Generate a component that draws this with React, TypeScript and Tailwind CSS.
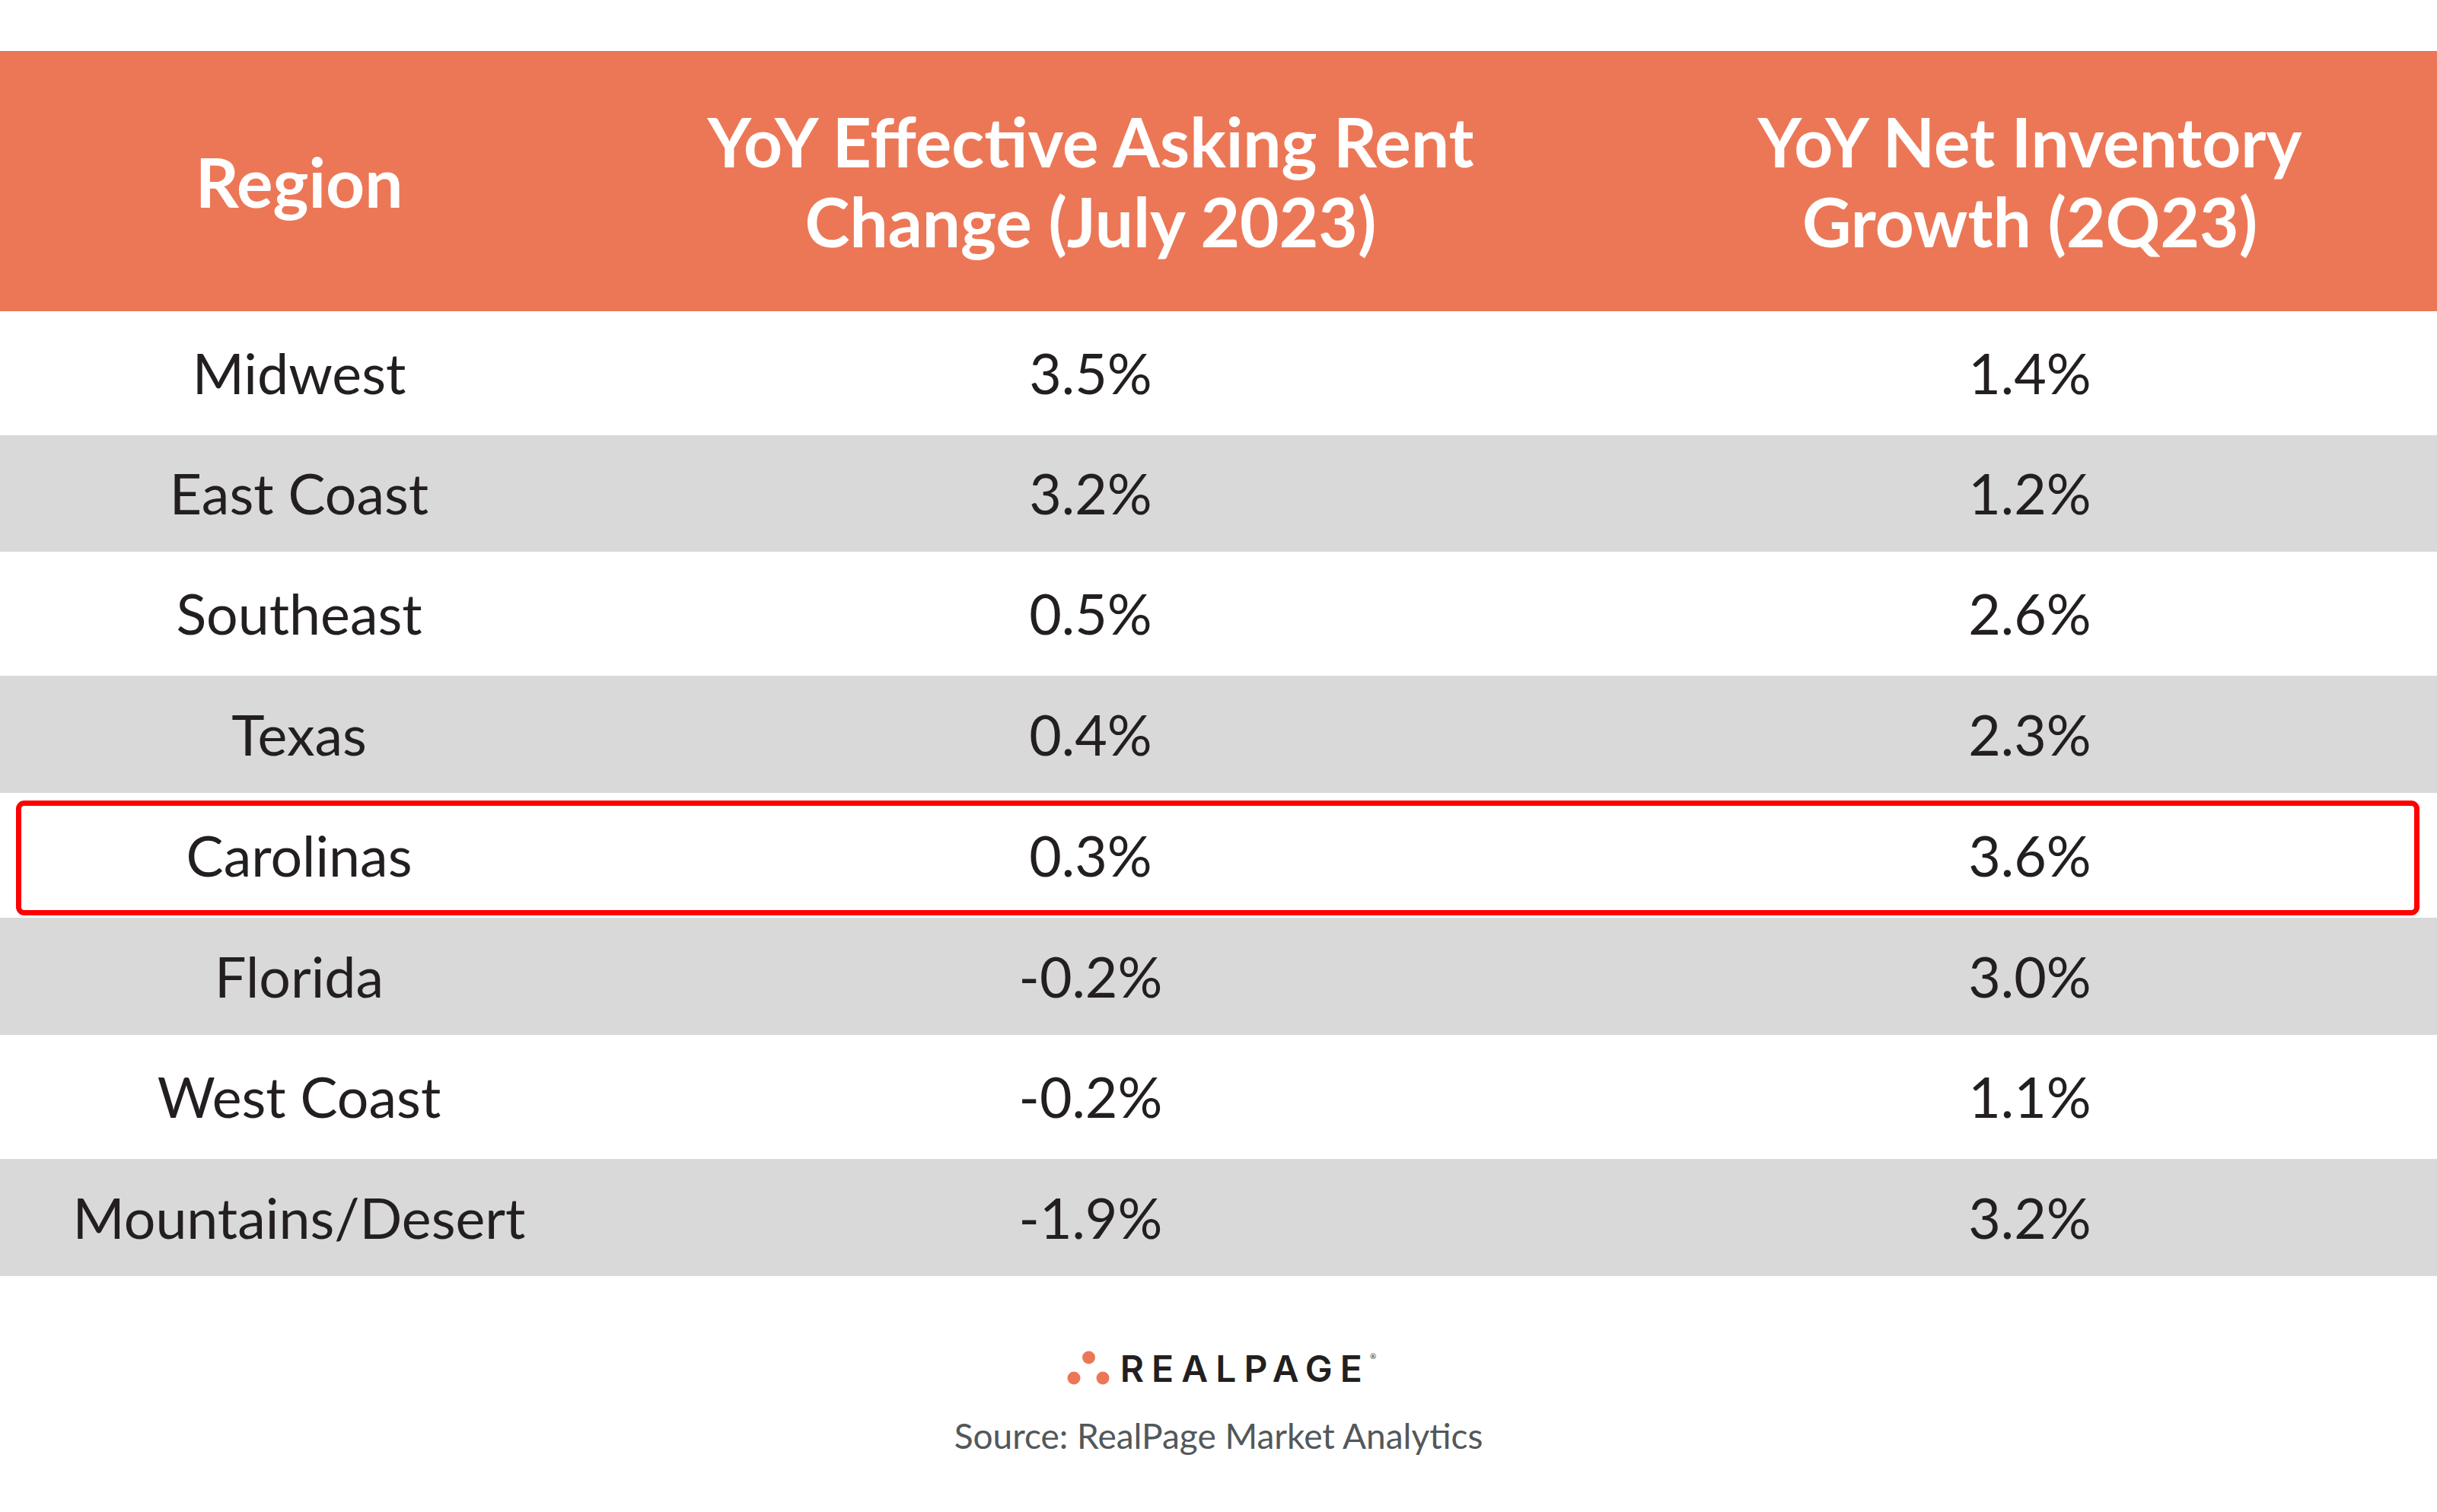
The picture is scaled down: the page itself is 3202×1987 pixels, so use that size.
import React from "react";

const rows: { region: string; rent: string; inv: string; h: string; gray: boolean; hl?: boolean }[] = [
  { region: "Midwest", rent: "3.5%", inv: "1.4%", h: "h-[163px]", gray: false },
  { region: "East Coast", rent: "3.2%", inv: "1.2%", h: "h-[153px]", gray: true },
  { region: "Southeast", rent: "0.5%", inv: "2.6%", h: "h-[163px]", gray: false },
  { region: "Texas", rent: "0.4%", inv: "2.3%", h: "h-[154px]", gray: true },
  { region: "Carolinas", rent: "0.3%", inv: "3.6%", h: "h-[164px]", gray: false, hl: true },
  { region: "Florida", rent: "-0.2%", inv: "3.0%", h: "h-[154px]", gray: true },
  { region: "West Coast", rent: "-0.2%", inv: "1.1%", h: "h-[163px]", gray: false },
  { region: "Mountains/Desert", rent: "-1.9%", inv: "3.2%", h: "h-[154px]", gray: true },
];

export default function App() {
  return (
    <div
      className="w-[3202px] h-[1987px] bg-white pt-[67px] overflow-hidden"
      style={{ fontFamily: "Lato, 'Liberation Sans', sans-serif" }}
    >
      {/* Header */}
      <div className="h-[342px] bg-[#EC7756] grid grid-cols-[786px_1294px_1fr] items-center text-white font-bold text-[89px] leading-[105px] text-center">
        <div>Region</div>
        <div>
          YoY Effective Asking Rent
          <br />
          Change (July 2023)
        </div>
        <div className="pl-[52px]">
          YoY Net Inventory
          <br />
          Growth (2Q23)
        </div>
      </div>

      {/* Rows */}
      {rows.map((r) => (
        <div
          key={r.region}
          className={`relative grid grid-cols-[786px_1294px_1fr] items-center text-center text-[73.5px] text-[#231F20] ${r.h} ${
            r.gray ? "bg-[#D9D9D9]" : "bg-white"
          }`}
        >
          <div>{r.region}</div>
          <div>{r.rent}</div>
          <div className="pl-[52px]">{r.inv}</div>
          {r.hl && (
            <div className="absolute left-[21px] right-[23px] top-[10px] bottom-[3px] border-[7px] border-[#FF0000] rounded-[11px] pointer-events-none" />
          )}
        </div>
      ))}

      {/* Footer */}
      <div className="flex flex-col items-center pt-[98px]">
        <div className="flex items-end gap-[14px] pl-[8px]">
          <svg width="56" height="46" viewBox="0 0 56 46" className="mb-[-2px]">
            <circle cx="28.5" cy="9" r="8.5" fill="#EC7756" />
            <circle cx="9" cy="36" r="8.5" fill="#EC7756" />
            <circle cx="47" cy="36" r="8.5" fill="#EC7756" />
          </svg>
          <div className="flex items-start">
            <span
              className="text-[48px] leading-[40px] font-semibold tracking-[0.21em] text-[#231F20]"
              style={{ fontFamily: "Inter, 'DejaVu Sans', sans-serif" }}
            >
              REALPAGE
            </span>
            <span className="text-[10px] leading-[10px] text-[#231F20] mt-[-2px]">®</span>
          </div>
        </div>
        <div className="mt-[40px] text-[46px] leading-[56px] text-[#53585A]">
          Source: RealPage Market Analytics
        </div>
      </div>
    </div>
  );
}
